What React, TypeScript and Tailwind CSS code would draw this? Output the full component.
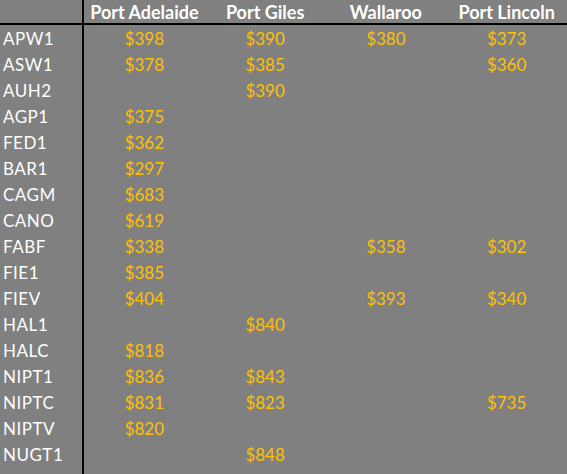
const PORTS = ["Port Adelaide", "Port Giles", "Wallaroo", "Port Lincoln"];

const ROWS: [string, (string | null)[]][] = [
  ["APW1", ["$398", "$390", "$380", "$373"]],
  ["ASW1", ["$378", "$385", null, "$360"]],
  ["AUH2", [null, "$390", null, null]],
  ["AGP1", ["$375", null, null, null]],
  ["FED1", ["$362", null, null, null]],
  ["BAR1", ["$297", null, null, null]],
  ["CAGM", ["$683", null, null, null]],
  ["CANO", ["$619", null, null, null]],
  ["FABF", ["$338", null, "$358", "$302"]],
  ["FIE1", ["$385", null, null, null]],
  ["FIEV", ["$404", null, "$393", "$340"]],
  ["HAL1", [null, "$840", null, null]],
  ["HALC", ["$818", null, null, null]],
  ["NIPT1", ["$836", "$843", null, null]],
  ["NIPTC", ["$831", "$823", null, "$735"]],
  ["NIPTV", ["$820", null, null, null]],
  ["NUGT1", [null, "$848", null, null]],
];

export default function App() {
  return (
    <div className="w-[567px] h-[474px] bg-[#808080] overflow-hidden font-['Lato','Open_Sans',sans-serif] text-[17px]">
      {/* header */}
      <div className="flex h-[25px] border-b-[2px] border-black">
        <div className="w-[84px] shrink-0 border-r-[2px] border-black" />
        {PORTS.map((p) => (
          <div key={p} className="flex-1 flex items-center justify-center pt-[2px] font-bold text-[18px] text-white">
            {p}
          </div>
        ))}
      </div>
      <div className="flex h-[449px]">
        <div className="w-[84px] shrink-0 border-r-[2px] border-black pt-[1px]">
          {ROWS.map(([code]) => (
            <div key={code} className="h-[26px] flex items-center pl-[3px] text-white tracking-[0.5px]">
              {code}
            </div>
          ))}
        </div>
        <div className="flex-1 pt-[1px]">
          {ROWS.map(([code, vals]) => (
            <div key={code} className="h-[26px] flex">
              {vals.map((v, i) => (
                <div key={i} className="flex-1 flex items-center justify-center text-[#ffc000]">
                  {v}
                </div>
              ))}
            </div>
          ))}
        </div>
      </div>
    </div>
  );
}
